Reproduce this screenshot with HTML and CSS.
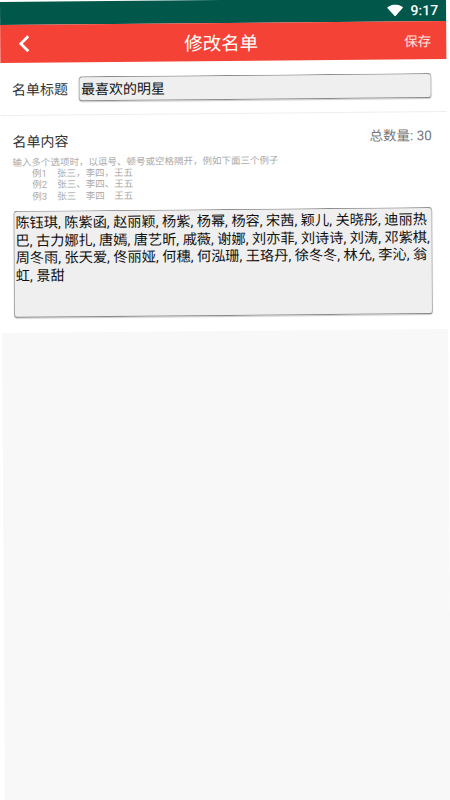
FILE: index.html
```html
<!DOCTYPE html>
<html lang="zh-CN">
<head>
<meta charset="utf-8">
<title>修改名单</title>
<link rel="stylesheet" href="styles.css">
</head>
<body>
<div class="screen">
  <div class="status">
    <svg class="wifi" viewBox="0 0 16 12" width="16" height="12"><path d="M0 3.200C2.200 1.200 5 0 8 0s5.800 1.200 8 3.200L8 12z" fill="#fff"/></svg>
    <span class="time">9:17</span>
  </div>
  <header class="bar">
    <svg class="back" viewBox="0 0 12 18" width="12" height="18"><path d="M10 1.500 2.500 9l7.500 7.500" fill="none" stroke="#fff" stroke-width="2.800"/></svg>
    <h1 class="title">修改名单</h1>
    <span class="save">保存</span>
  </header>
  <section class="row-title">
    <label class="label" for="t">名单标题</label>
    <input class="field" id="t" type="text" value="最喜欢的明星">
  </section>
  <section class="content">
    <div class="content-head">
      <span class="label">名单内容</span>
      <span class="count">总数量: 30</span>
    </div>
    <p class="hint">输入多个选项时，以逗号、顿号或空格隔开，例如下面三个例子</p>
    <ul class="examples">
      <li><span class="ex-name">例1</span><span>张三，李四，王五</span></li>
      <li><span class="ex-name">例2</span><span>张三、李四、王五</span></li>
      <li><span class="ex-name">例3</span><span>张三　李四　王五</span></li>
    </ul>
    <textarea class="area">陈钰琪, 陈紫函, 赵丽颖, 杨紫, 杨幂, 杨容, 宋茜, 颖儿, 关晓彤, 迪丽热巴, 古力娜扎, 唐嫣, 唐艺昕, 戚薇, 谢娜, 刘亦菲, 刘诗诗, 刘涛, 邓紫棋, 周冬雨, 张天爱, 佟丽娅, 何穗, 何泓珊, 王珞丹, 徐冬冬, 林允, 李沁, 翁虹, 景甜</textarea>
  </section>
  <div class="rest"></div>
</div>
</body>
</html>
```
FILE: styles.css
```css
* { box-sizing: border-box; }
html, body { margin: 0; height: 100%; background: #fff; overflow: hidden; }
body { padding-top: 2px; font-family: Roboto, "Noto Sans CJK SC", sans-serif; }
.screen {
  width: 446px;
  height: 806px;
  display: flex;
  flex-direction: column;
  transform: skew(0.36deg, -0.52deg);
  transform-origin: 0 0;
  background: #fff;
}
.status {
  height: 23px;
  background: #02574b;
  display: flex;
  align-items: center;
  justify-content: flex-end;
  gap: 7px;
  padding: 0 8px 0 0;
  color: #fff;
}
.wifi { display: block; }
.time { font-size: 14px; font-weight: 500; }
.bar {
  height: 37.500px;
  background: #f44336;
  color: #fff;
  display: grid;
  grid-template-columns: 1fr auto 1fr;
  align-items: center;
  padding: 0 15px 0 11px;
}
.back { display: block; margin-left: 6.500px; }
.title { margin: 0; font-size: 18.500px; font-weight: 400; }
.save { justify-self: end; font-size: 13.500px; color: #fbe3e0; }
.row-title {
  height: 53.500px;
  display: flex;
  align-items: center;
  gap: 10px;
  padding: 1px 15.500px 0 11.500px;
  border-bottom: 1px solid #eee;
}
.label { font-size: 14px; color: #333; }
.field, .area {
  display: block;
  background: #efefef;
  color: #111;
  font-family: inherit;
  border: 1px solid #999;
  border-top-color: #8a8a8a;
  border-left-color: #a5a5a5;
  border-right-color: #b0b0b0;
  border-bottom-color: #8a8a8a;
  border-radius: 4px;
  box-shadow: 0 1px 1px #ccc;
  outline: 0;
}
.field { flex: 1; min-width: 0; height: 24.500px; font-size: 14px; padding: 0 2px; }
.content { height: 217px; padding: 13px 15px 0 11.500px; }
.content-head { display: flex; justify-content: space-between; align-items: flex-start; height: 24px; }
.content-head .label { line-height: 20px; padding-top: 3px; }
.count { font-size: 13.500px; line-height: 18px; color: #777; padding-top: 1px; }
.hint { margin: 3.500px 0 0; font-size: 9.500px; line-height: 11.500px; color: #aaa; }
.examples { list-style: none; margin: 0; padding: 0 0 0 19.500px; font-size: 9.500px; line-height: 11.300px; color: #aaa; }
.examples li { display: flex; }
.ex-name { width: 25px; }
.area {
  width: 419px;
  height: 107px;
  margin: 9.500px 0 0 0.500px;
  padding: 3px 0 2px 1px;
  font-size: 14.200px;
  line-height: 17.500px;
  resize: none;
  overflow: hidden;
}
.rest { flex: 1; background: #f8f8f8; }
```
